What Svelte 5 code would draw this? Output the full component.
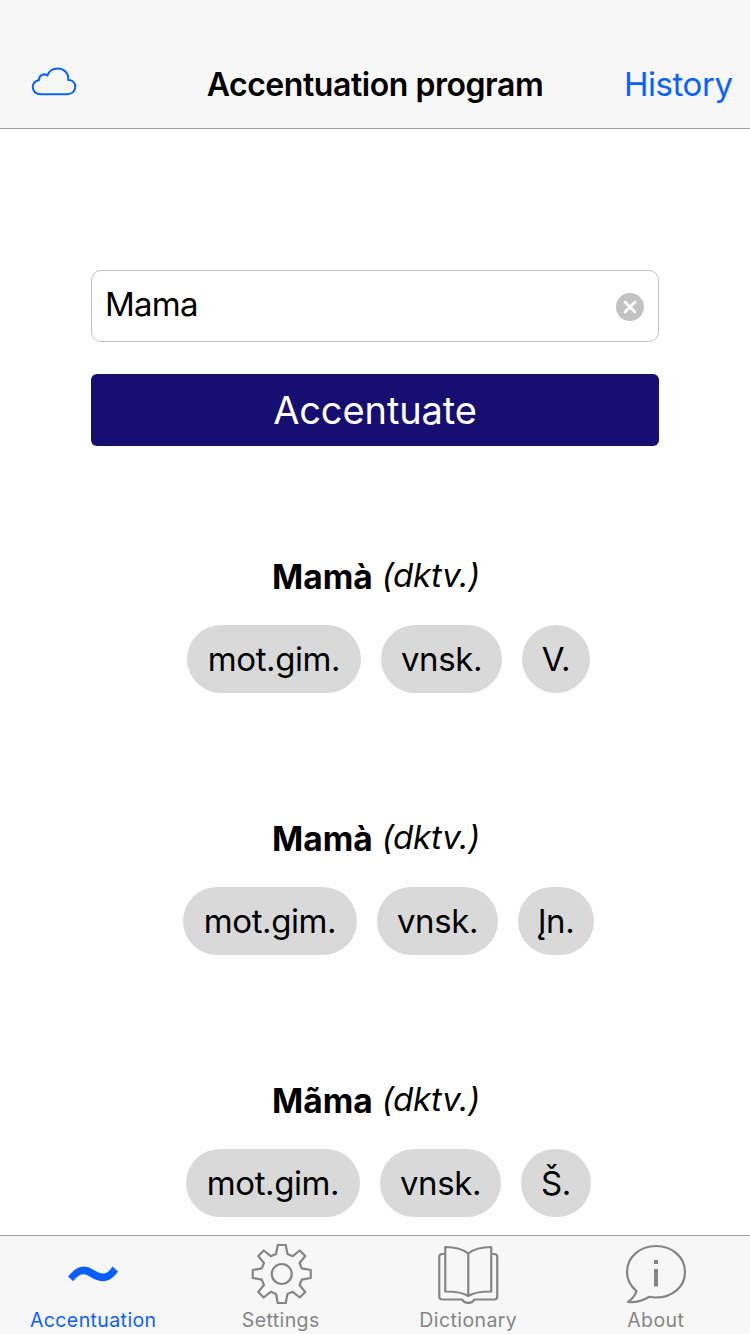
<script>
  const results = [
    { word: 'Mamà', chips: [['mot.gim.', 174], ['vnsk.', 121], ['V.', 68]] },
    { word: 'Mamà', chips: [['mot.gim.', 174], ['vnsk.', 121], ['Įn.', 76]] },
    { word: 'Mãma', chips: [['mot.gim.', 174], ['vnsk.', 121], ['Š.', 70]] }
  ];

  // One quarter of the gear outline, turned four times about the centre.
  let quarter = [[4, -29], [5.7, -20], [11, -17.8], [18, -23.5], [23.5, -18], [17.8, -11], [20, -5.7], [29, -4]];
  const gear = [];
  for (let i = 0; i < 4; i++) {
    gear.push(...quarter);
    quarter = quarter.map(([x, y]) => [-y, x]);
  }
  const gearPoints = gear.map((p) => p.join(',')).join(' ');
</script>

<div class="screen">
  <header>
    <svg class="cloud" width="46" height="30" viewBox="0 0 46 30">
      <path d="M9.500 27.300 H36 C41 27.300 44.300 24 44.300 19.800 C44.300 15.500 41 13 37.200 13 C38 6.500 33 1.500 26.500 1.500 C21.500 1.500 18 4.500 16.300 8.500 C12.500 5.800 7.700 8.500 8 13 C4.500 14 1.700 16.500 1.700 20 C1.700 24.200 5 27.300 9.500 27.300 Z" />
    </svg>
    <h1>Accentuation program</h1>
    <span class="history">History</span>
  </header>

  <main>
    <div class="field">
      <span>Mama</span>
      <svg width="28" height="28" viewBox="0 0 28 28">
        <circle cx="14" cy="14" r="14" fill="#c2c2c2" />
        <path d="M9 9 L19 19 M19 9 L9 19" stroke="#fff" stroke-width="2.800" stroke-linecap="round" />
      </svg>
    </div>
    <button>Accentuate</button>

    {#each results as result}
      <section>
        <h2><b>{result.word}</b><i>(dktv.)</i></h2>
        <div class="chips">
          {#each result.chips as [label, width]}
            <span class="chip" style="width: {width}px">{label}</span>
          {/each}
        </div>
      </section>
    {/each}
  </main>

  <nav>
    <div class="tab active">
      <svg width="64" height="64" viewBox="-31 -32 64 64">
        <path d="M-25 2.500 C-20 -3.500 -15 -7.600 -9.500 -7.600 C-1 -7.600 3 -.5 10.500 -.5 C14 -.5 16.500 -3 19.500 -7.500 L25 -2.500 C20.500 3.500 16.500 7.200 9.500 7.200 C.5 7.200 -3.500 .3 -10 .3 C-13.500 .3 -16.500 3 -19.700 7.200 Z" fill="currentColor" />
      </svg>
      <span>Accentuation</span>
    </div>
    <div class="tab">
      <svg width="64" height="64" viewBox="-32.750 -32 64 64">
        <polygon points={gearPoints} />
        <circle r="10" />
      </svg>
      <span>Settings</span>
    </div>
    <div class="tab">
      <svg width="64" height="64" viewBox="-31.250 -32 64 64">
        <path d="M0 -20.500 C-5 -24.500 -14 -27 -23 -27 V17.500 C-14 17.500 -5 18.500 0 22 C5 18.500 14 17.500 23 17.500 V-27 C14 -27 5 -24.500 0 -20.500 V22 M-23 -20 H-26 Q-29 -20 -29 -17 V22.500 Q-29 25.500 -26 25.500 H-6 C-4 30 4 30 6 25.500 H26 Q29 25.500 29 22.500 V-17 Q29 -20 26 -20 H23" />
      </svg>
      <span>Dictionary</span>
    </div>
    <div class="tab">
      <svg width="64" height="64" viewBox="-32 -32 64 64">
        <path d="M0 -28 C16 -28 29 -17 29 -2 C29 13 16 23.500 0 23.500 C-2.500 23.500 -4.500 23.200 -6.500 22.700 C-13 26.500 -21 28.800 -28 28 C-24 25 -20.500 21.500 -19.500 17 C-25.500 12 -29 6 -29 -2 C-29 -17 -16 -28 0 -28 Z" />
        <path d="M0 -14 V-10 M0 -5 V12.500" stroke-width="4" />
      </svg>
      <span>About</span>
    </div>
  </nav>
</div>

<style>
  :global(body) { margin: 0; }
  .screen {
    width: 750px;
    height: 1334px;
    display: flex;
    flex-direction: column;
    overflow: hidden;
    background: #fff;
    color: #000;
    font-family: Inter, "Liberation Sans", sans-serif;
  }
  header {
    box-sizing: border-box;
    height: 129px;
    flex: none;
    display: grid;
    grid-template-columns: 175px 400px 175px;
    align-items: start;
    padding-top: 63px;
    background: #f7f7f7;
    border-bottom: 1px solid #a4a4a4;
  }
  .cloud { margin: 4px 0 0 31px; fill: none; stroke: #0a60ff; stroke-width: 2; stroke-linejoin: round; }
  h1 { margin: 1px 0 0; font-size: 32px; line-height: 42px; font-weight: 600; letter-spacing: -.45px; text-align: center; white-space: nowrap; }
  .history { justify-self: end; margin-right: 17.500px; font-size: 33px; line-height: 42px; letter-spacing: -.45px; color: #0a60ff; }
  main { flex: 1; min-height: 0; overflow: hidden; display: flex; flex-direction: column; align-items: center; padding-top: 141px; }
  .field {
    box-sizing: border-box;
    width: 568px;
    height: 72px;
    flex: none;
    display: flex;
    justify-content: space-between;
    align-items: center;
    padding: 0 14px 0 13px;
    border: 1px solid #c3c3c3;
    border-radius: 10px;
    font-size: 33px;
    letter-spacing: -.75px;
  }
  .field span { margin-top: -5px; }
  .field svg { margin-top: 2px; fill: none; }
  button {
    width: 568px;
    height: 72px;
    flex: none;
    margin: 32px 0 0;
    padding: 0;
    border: 0;
    border-radius: 6px;
    background: #160e70;
    color: #fff;
    font: 38px/72px Inter, "Liberation Sans", sans-serif;
    letter-spacing: -.1px;
  }
  section { width: 750px; height: 262px; flex: none; display: flex; flex-direction: column; align-items: center; }
  button + section { margin-top: 109px; }
  h2 { display: flex; gap: 9px; margin: 0; padding-left: 2px; height: 42px; font-size: 33px; line-height: 42px; font-weight: 400; }
  b { margin-top: 1px; font-weight: 700; font-size: 33.500px; }
  i { margin-top: -1px; letter-spacing: -.25px; }
  .chips { display: flex; gap: 20px; padding-left: 27px; margin-top: 28px; }
  .chip { height: 68px; border-radius: 34px; background: #d9d9d9; font-size: 33px; line-height: 68px; letter-spacing: -.4px; text-align: center; white-space: nowrap; }
  nav {
    box-sizing: border-box;
    height: 99px;
    flex: none;
    display: grid;
    grid-template-columns: repeat(4, 187.5px);
    padding-top: 6px;
    background: #f7f7f7;
    border-top: 1px solid #a4a4a4;
  }
  .tab { display: flex; flex-direction: column; align-items: center; color: #858585; font-size: 19.500px; line-height: 24px; letter-spacing: .4px; }
  .tab svg { fill: none; stroke: currentColor; stroke-width: 2.200; stroke-linejoin: round; }
  .tab span { margin: 2px 1px 0 0; }
  .active { color: #0a60ff; }
  .active svg { stroke: none; }
</style>
